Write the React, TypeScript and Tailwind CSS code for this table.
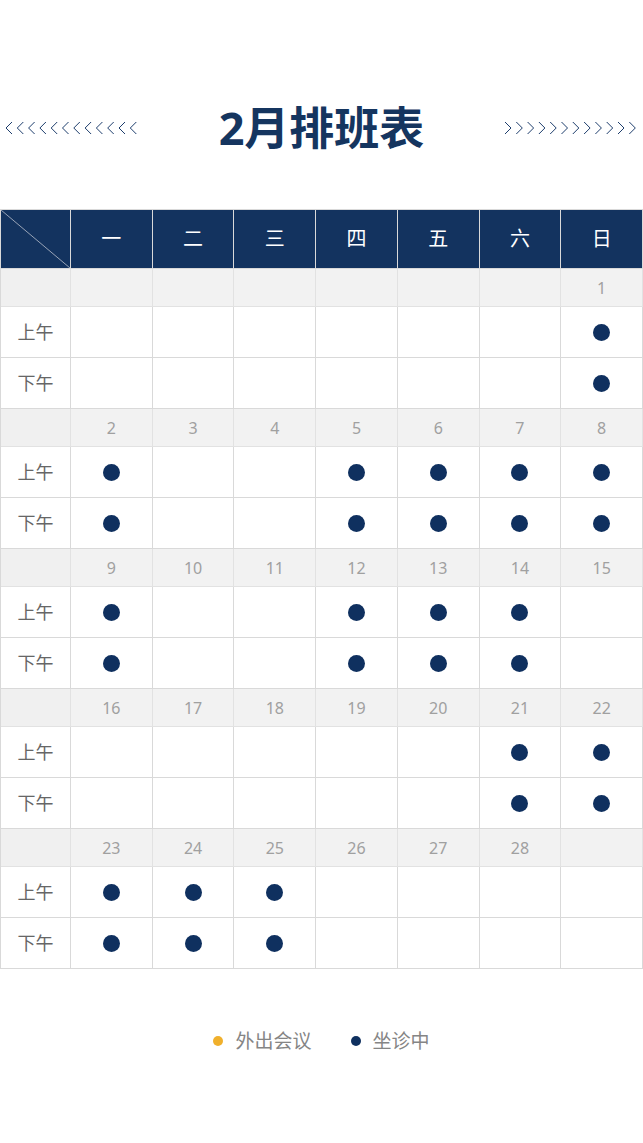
import React from "react";

const FONT = { fontFamily: '"Noto Sans", "Noto Sans CJK SC", sans-serif' };

const days = ["一", "二", "三", "四", "五", "六", "日"];

type Week = { dates: (number | null)[]; on: number[] };

const weeks: Week[] = [
  { dates: [null, null, null, null, null, null, 1], on: [6] },
  { dates: [2, 3, 4, 5, 6, 7, 8], on: [0, 3, 4, 5, 6] },
  { dates: [9, 10, 11, 12, 13, 14, 15], on: [0, 3, 4, 5] },
  { dates: [16, 17, 18, 19, 20, 21, 22], on: [5, 6] },
  { dates: [23, 24, 25, 26, 27, 28, null], on: [0, 1, 2] },
];

function Chevrons({ dir }: { dir: "left" | "right" }) {
  const items = Array.from({ length: 12 });
  return (
    <svg width="136" height="14" viewBox="0 0 136 14" className="text-[#1d3d6c]">
      {items.map((_, i) => {
        const x = i * 11.3 + 2;
        const d =
          dir === "left"
            ? `M${x + 6} 1 L${x} 7 L${x + 6} 13`
            : `M${x} 1 L${x + 6} 7 L${x} 13`;
        return <path key={i} d={d} fill="none" stroke="currentColor" strokeWidth="1" />;
      })}
    </svg>
  );
}

function Dot() {
  return <span className="block h-[17px] w-[17px] rounded-full bg-[#0f305f]" />;
}

export default function App() {
  return (
    <div className="w-[643px] bg-white pb-[60px]" style={FONT}>
      <div className="flex h-[209px] items-center justify-between px-[4px] pt-[46px]">
        <Chevrons dir="left" />
        <h1 className="text-[45px] font-bold leading-none text-[#15355f]">2月排班表</h1>
        <Chevrons dir="right" />
      </div>

      <div className="grid grid-cols-[70px_repeat(7,1fr)] border-l border-t border-[#d9d9d9]">
        <div className="relative h-[59px] border-r border-b border-[#d9d9d9] bg-[#13335f]">
          <svg className="absolute inset-0 h-full w-full" preserveAspectRatio="none" viewBox="0 0 70 59">
            <line x1="0" y1="0" x2="70" y2="59" stroke="#9aa6b8" strokeWidth="1" />
          </svg>
        </div>
        {days.map((d) => (
          <div
            key={d}
            className="flex h-[59px] items-center justify-center border-r border-b border-[#d9d9d9] bg-[#13335f] text-[20px] text-white"
          >
            {d}
          </div>
        ))}

        {weeks.map((w, wi) => (
          <React.Fragment key={wi}>
            <div className="h-[38px] border-r border-b border-[#e2e2e2] bg-[#f0f0f0]" />
            {w.dates.map((dt, i) => (
              <div
                key={i}
                className="flex h-[38px] items-center justify-center border-r border-b border-[#e2e2e2] bg-[#f2f2f2] text-[16px] text-[#a0a0a0]"
              >
                {dt ?? ""}
              </div>
            ))}
            {["上午", "下午"].map((label) => (
              <React.Fragment key={label}>
                <div className="flex h-[51px] items-center justify-center border-r border-b border-[#d9d9d9] text-[18px] text-[#666]">
                  {label}
                </div>
                {w.dates.map((_, i) => (
                  <div
                    key={i}
                    className="flex h-[51px] items-center justify-center border-r border-b border-[#d9d9d9]"
                  >
                    {w.on.includes(i) ? <Dot /> : null}
                  </div>
                ))}
              </React.Fragment>
            ))}
          </React.Fragment>
        ))}
      </div>

      <div className="mt-[58px] flex items-center justify-center text-[19px] text-[#858585]">
        <span className="mr-[12px] block h-[10px] w-[10px] rounded-full bg-[#f0b02c]" />
        <span>外出会议</span>
        <span className="mr-[12px] ml-[39px] block h-[10px] w-[10px] rounded-full bg-[#0f305f]" />
        <span>坐诊中</span>
      </div>
    </div>
  );
}
